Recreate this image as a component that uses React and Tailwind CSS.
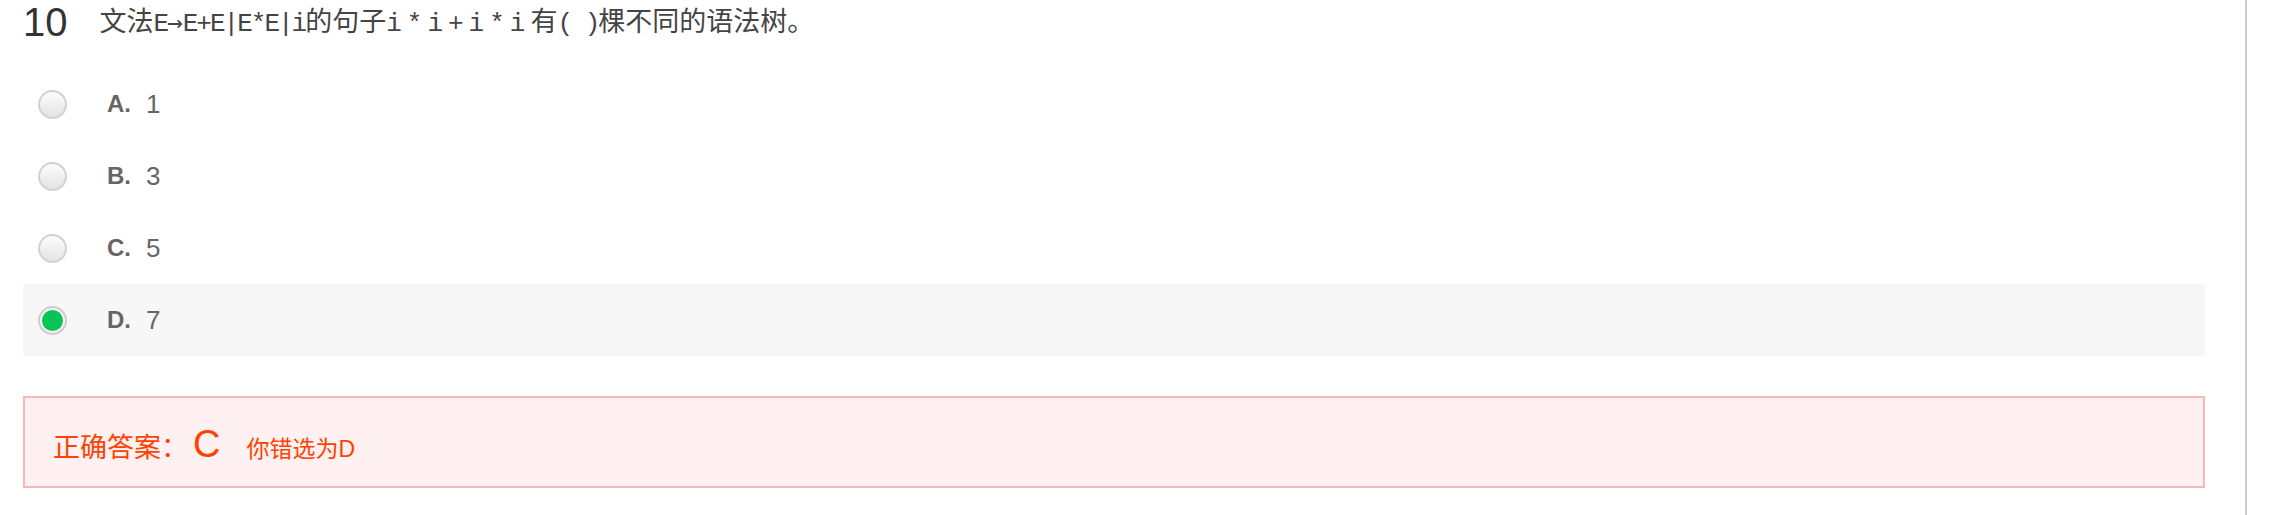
import React from 'react';

const options = [
  { key: 'A', value: '1' },
  { key: 'B', value: '3' },
  { key: 'C', value: '5' },
  { key: 'D', value: '7', checked: true },
];

function Radio({ checked }) {
  if (checked) {
    return (
      <span className="flex h-[29px] w-[29px] items-center justify-center rounded-full border-2 border-[#cdcdcd] bg-[#f4f4f4]">
        <span className="h-[21px] w-[21px] rounded-full bg-[#08c456]"></span>
      </span>
    );
  }
  return (
    <span className="block h-[29px] w-[29px] rounded-full border-2 border-[#d2d2d2] bg-gradient-to-b from-[#fdfdfd] to-[#e3e3e3]"></span>
  );
}

export default function App() {
  return (
    <div className="flex h-[515px] w-full bg-white">
      {/* question column, grey rule on the right */}
      <div className="h-full w-[2247px] shrink-0 border-r-2 border-[#cccccc] pl-[23px] pr-[40px]">
        <div className="flex h-[43px] items-center">
          <span className="font-['Liberation_Sans',sans-serif] text-[40px] leading-none text-[#333]">10</span>
          <p className="ml-[32px] font-['Noto_Sans_CJK_SC',sans-serif] text-[27px] leading-none text-[#444]">
            文法
            <span className="font-['Liberation_Mono',monospace] text-[26px] tracking-[-2px]">
              E<span className="font-['DejaVu_Sans_Mono',monospace] tracking-normal">→</span>E+E|E*E|i
            </span>
            的句子
            <span className="font-['Liberation_Mono',monospace] text-[26px] tracking-[5px]">i*i+i*i</span>
            有
            <span className="font-['Liberation_Mono',monospace] text-[26px] tracking-[-2px]">( )</span>
            棵不同的语法树。
          </p>
        </div>

        <div className="mt-[25px] flex flex-col">
          {options.map((o) => (
            <div
              key={o.key}
              className={`flex h-[72px] items-center pl-[15px] ${o.checked ? 'bg-[#f7f7f7]' : ''}`}
            >
              <Radio checked={o.checked} />
              <span className="ml-[40px] font-['Liberation_Sans',sans-serif] text-[24px] font-bold leading-none text-[#666]">
                {o.key}.
              </span>
              <span className="ml-[15px] font-['Liberation_Sans',sans-serif] text-[26px] leading-none text-[#666]">
                {o.value}
              </span>
            </div>
          ))}
        </div>

        <div className="mt-[40px] flex h-[92px] items-baseline border-2 border-[#f6b8b8] bg-[#fff1f1] pl-[28px] pt-[27px] text-[#ff4200]">
          <span className="font-['Noto_Sans_CJK_SC',sans-serif] text-[27px] leading-none">正确答案：</span>
          <span className="ml-[5px] font-['Liberation_Sans',sans-serif] text-[38px] leading-none">C</span>
          <span className="ml-[26px] font-['Noto_Sans_CJK_SC',sans-serif] text-[23px] leading-none">
            你错选为<span className="font-['Liberation_Sans',sans-serif]">D</span>
          </span>
        </div>
      </div>
    </div>
  );
}
